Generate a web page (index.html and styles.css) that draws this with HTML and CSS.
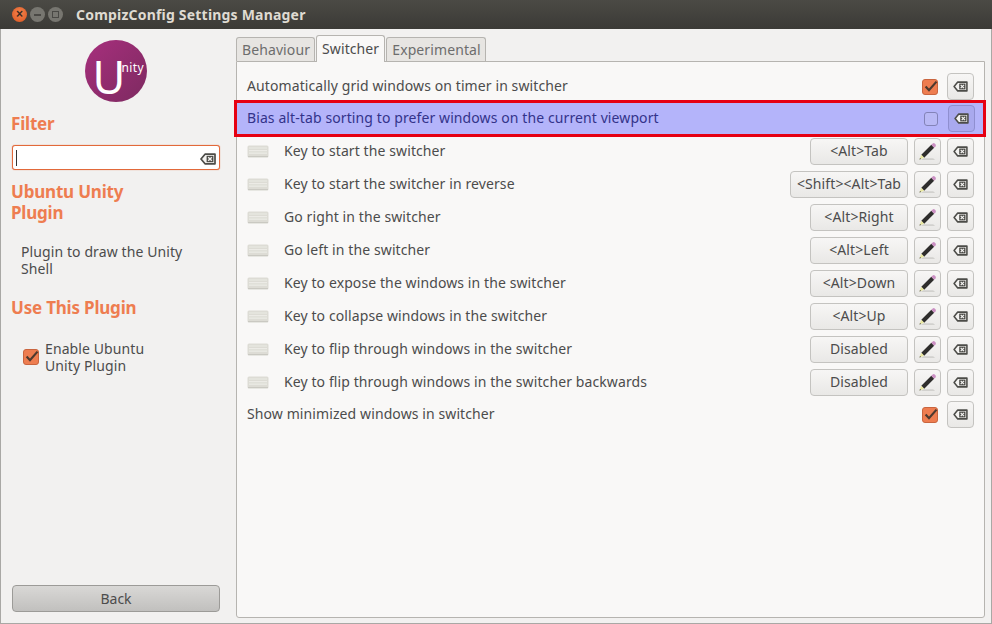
FILE: index.html
```html
<!DOCTYPE html>
<html lang="en">
<head>
<meta charset="utf-8">
<title>CompizConfig Settings Manager</title>
<link rel="stylesheet" href="styles.css">
</head>
<body>
<svg class="defs" width="0" height="0" aria-hidden="true">
  <symbol id="clear" viewBox="0 0 16 12">
    <path d="M5 1.2H15V10.8H5L1 6Z" fill="#f4f3f1" stroke="#4c4c48" stroke-width="1.7" stroke-linejoin="round"/>
    <rect x="6.6" y="2.8" width="6.8" height="6.4" fill="#4c4c48"/>
    <path d="M8.2 4.2L11.8 7.8M11.8 4.2L8.2 7.8" stroke="#f4f3f1" stroke-width="1.4"/>
  </symbol>
  <symbol id="pencil" viewBox="0 0 20 20">
    <path d="M3 19H18L16 17.2H6Z" fill="#d2d1ce"/>
    <path d="M3.5 13.5L14 3L17 6L6.5 16.5Z" fill="#2e2d2c"/>
    <path d="M14 3L15.5 1.5Q16.5 .7 17.6 1.6L18.4 2.4Q19.3 3.5 18.5 4.5L17 6Z" fill="#cb8fc3"/>
    <path d="M3.5 13.5L6.5 16.5L1.5 18.5Z" fill="#e8e6a0"/>
    <path d="M2.2 16.8L3.2 17.8L1.5 18.5Z" fill="#333"/>
  </symbol>
  <symbol id="keyboard" viewBox="0 0 22 13">
    <rect x=".5" y=".5" width="21" height="12" rx="1.5" fill="#dddcd5"/>
    <path d="M2 3H20M2 5.6H20M2 8.2H20" stroke="#ecebe6" stroke-width="1.2"/>
    <path d="M1 11.6H21" stroke="#c8c7c0" stroke-width="1"/>
  </symbol>
  <symbol id="check" viewBox="0 0 16 16">
    <rect x=".5" y=".5" width="15" height="15" rx="2.5" fill="#ee7d50" stroke="#c9653f"/>
    <path d="M3.6 7.5L7 11.2L14.5 2.6" fill="none" stroke="#4d3a2f" stroke-width="2.2"/>
  </symbol>
</svg>

<header class="titlebar">
  <div class="wm-buttons">
    <span class="wm wm-close">×</span>
    <span class="wm wm-min"><i class="wm-dash"></i></span>
    <span class="wm wm-max"><i class="wm-box"></i></span>
  </div>
  <h1 class="title">CompizConfig Settings Manager</h1>
</header>

<div class="window">
  <aside class="sidebar">
    <div class="logo-wrap">
      <div class="logo"><span class="logo-u">U</span><span class="logo-nity">nity</span></div>
    </div>
    <h2 class="side-heading filter-heading">Filter</h2>
    <div class="filter-input">
      <span class="caret"></span>
      <svg class="filter-clear"><use href="#clear"/></svg>
    </div>
    <h2 class="side-heading plugin-heading">Ubuntu Unity<br>Plugin</h2>
    <p class="plugin-desc">Plugin to draw the Unity<br>Shell</p>
    <h2 class="side-heading use-heading">Use This Plugin</h2>
    <label class="enable">
      <svg class="enable-check"><use href="#check"/></svg>
      <span>Enable Ubuntu<br>Unity Plugin</span>
    </label>
    <button class="back">Back</button>
  </aside>

  <main class="content">
    <nav class="tabs">
      <span class="tab">Behaviour</span>
      <span class="tab tab-active">Switcher</span>
      <span class="tab">Experimental</span>
    </nav>
    <section class="panel">
      <div class="row">
        <span class="label">Automatically grid windows on timer in switcher</span>
        <svg class="check"><use href="#check"/></svg>
        <span class="icon-btn"><svg class="clear-icon"><use href="#clear"/></svg></span>
      </div>
      <div class="row row-selected">
        <span class="label">Bias alt-tab sorting to prefer windows on the current viewport</span>
        <span class="unchecked"></span>
        <span class="icon-btn"><svg class="clear-icon"><use href="#clear"/></svg></span>
      </div>
      <div class="row">
        <svg class="kbd"><use href="#keyboard"/></svg>
        <span class="label">Key to start the switcher</span>
        <span class="key-btn">&lt;Alt&gt;Tab</span>
        <span class="icon-btn"><svg class="pencil"><use href="#pencil"/></svg></span>
        <span class="icon-btn"><svg class="clear-icon"><use href="#clear"/></svg></span>
      </div>
      <div class="row">
        <svg class="kbd"><use href="#keyboard"/></svg>
        <span class="label">Key to start the switcher in reverse</span>
        <span class="key-btn key-wide">&lt;Shift&gt;&lt;Alt&gt;Tab</span>
        <span class="icon-btn"><svg class="pencil"><use href="#pencil"/></svg></span>
        <span class="icon-btn"><svg class="clear-icon"><use href="#clear"/></svg></span>
      </div>
      <div class="row">
        <svg class="kbd"><use href="#keyboard"/></svg>
        <span class="label">Go right in the switcher</span>
        <span class="key-btn">&lt;Alt&gt;Right</span>
        <span class="icon-btn"><svg class="pencil"><use href="#pencil"/></svg></span>
        <span class="icon-btn"><svg class="clear-icon"><use href="#clear"/></svg></span>
      </div>
      <div class="row">
        <svg class="kbd"><use href="#keyboard"/></svg>
        <span class="label">Go left in the switcher</span>
        <span class="key-btn">&lt;Alt&gt;Left</span>
        <span class="icon-btn"><svg class="pencil"><use href="#pencil"/></svg></span>
        <span class="icon-btn"><svg class="clear-icon"><use href="#clear"/></svg></span>
      </div>
      <div class="row">
        <svg class="kbd"><use href="#keyboard"/></svg>
        <span class="label">Key to expose the windows in the switcher</span>
        <span class="key-btn">&lt;Alt&gt;Down</span>
        <span class="icon-btn"><svg class="pencil"><use href="#pencil"/></svg></span>
        <span class="icon-btn"><svg class="clear-icon"><use href="#clear"/></svg></span>
      </div>
      <div class="row">
        <svg class="kbd"><use href="#keyboard"/></svg>
        <span class="label">Key to collapse windows in the switcher</span>
        <span class="key-btn">&lt;Alt&gt;Up</span>
        <span class="icon-btn"><svg class="pencil"><use href="#pencil"/></svg></span>
        <span class="icon-btn"><svg class="clear-icon"><use href="#clear"/></svg></span>
      </div>
      <div class="row">
        <svg class="kbd"><use href="#keyboard"/></svg>
        <span class="label">Key to flip through windows in the switcher</span>
        <span class="key-btn">Disabled</span>
        <span class="icon-btn"><svg class="pencil"><use href="#pencil"/></svg></span>
        <span class="icon-btn"><svg class="clear-icon"><use href="#clear"/></svg></span>
      </div>
      <div class="row">
        <svg class="kbd"><use href="#keyboard"/></svg>
        <span class="label">Key to flip through windows in the switcher backwards</span>
        <span class="key-btn">Disabled</span>
        <span class="icon-btn"><svg class="pencil"><use href="#pencil"/></svg></span>
        <span class="icon-btn"><svg class="clear-icon"><use href="#clear"/></svg></span>
      </div>
      <div class="row row-last">
        <span class="label">Show minimized windows in switcher</span>
        <svg class="check"><use href="#check"/></svg>
        <span class="icon-btn"><svg class="clear-icon"><use href="#clear"/></svg></span>
      </div>
    </section>
  </main>
</div>
</body>
</html>
```
FILE: styles.css
```css
* { box-sizing: border-box; }
html, body { margin: 0; padding: 0; }
body {
  width: 992px;
  height: 624px;
  overflow: hidden;
  display: flex;
  flex-direction: column;
  background: #f2f1f0;
  color: #4c4c4c;
  font: 14px/17px "Noto Sans", "Open Sans", sans-serif;
  letter-spacing: .1px;
}
.defs { position: absolute; }

/* Title bar */
.titlebar {
  height: 29px;
  flex: none;
  display: flex;
  align-items: center;
  padding-left: 12px;
  background: linear-gradient(#4b4a45, #3b3a36);
}
.wm-buttons { display: flex; gap: 3px; }
.wm {
  width: 15px;
  height: 15px;
  border-radius: 50%;
  display: flex;
  align-items: center;
  justify-content: center;
  background: #777670;
  color: #3a2a20;
  font: bold 12px/15px "Liberation Sans", sans-serif;
}
.wm-close { background: radial-gradient(circle at 50% 40%, #f58550, #d9541e); }
.wm-dash { width: 7px; height: 2px; background: #4a4945; }
.wm-box { width: 7px; height: 7px; border: 1px solid #4a4945; }
.title {
  margin: 0 0 0 13px;
  color: #dfdbd2;
  font: bold 14px/17px "Noto Sans", sans-serif;
  letter-spacing: .2px;
}

/* Window body */
.window {
  flex: 1;
  display: flex;
  border-left: 1px solid #a9a8a5;
  border-right: 1px solid #a9a8a5;
  border-bottom: 1px solid #a9a8a5;
}
.sidebar {
  width: 235px;
  flex: none;
  display: flex;
  flex-direction: column;
  padding: 0 0 0 10px;
}
.logo-wrap { display: flex; justify-content: center; padding-top: 11px; width: 209px; }
.logo {
  position: relative;
  width: 62px;
  height: 62px;
  border-radius: 50%;
  background: linear-gradient(135deg, #a72f7d, #7d2a60);
  color: #fff;
}
.logo-u {
  position: absolute;
  left: 8px;
  top: 14px;
  font: 45px/45px "Noto Sans", sans-serif;
}
.logo-nity {
  position: absolute;
  left: 37px;
  top: 20px;
  font: 12px/15px "Noto Sans", sans-serif;
  letter-spacing: .4px;
}
.side-heading {
  margin: 0;
  color: #ee7d50;
  font: bold 17px/21px "Noto Sans", sans-serif;
  letter-spacing: -.2px;
}
.filter-heading { margin-top: 11px; }
.filter-input {
  width: 208px;
  height: 25px;
  margin: 11px 0 0 1px;
  display: flex;
  align-items: center;
  justify-content: space-between;
  padding: 0 3px;
  background: #fff;
  border: 1px solid #e2693a;
  border-radius: 3px;
  box-shadow: 0 0 1px #e2693a;
}
.caret { width: 1px; height: 16px; background: #333; }
.filter-clear { width: 16px; height: 12px; margin-top: 2px; }
.plugin-heading { margin-top: 11px; }
.plugin-desc { margin: 20px 0 0 10px; }
.use-heading { margin-top: 20px; }
.enable {
  display: flex;
  align-items: center;
  gap: 6px;
  margin: 22px 0 0 12px;
}
.enable-check { width: 16px; height: 16px; flex: none; }
.back {
  width: 208px;
  height: 27px;
  margin-top: auto;
  margin-bottom: 11px;
  margin-left: 1px;
  border: 1px solid #9c9b98;
  border-radius: 4px;
  background: linear-gradient(#d9d8d6, #c1c0be);
  color: #4c4c4c;
  font: 14px/17px "Noto Sans", sans-serif;
}

/* Content */
.content { flex: 1; display: flex; flex-direction: column; padding-top: 8px; padding-bottom: 5px; min-width: 0; }
.tabs { display: flex; gap: 1px; height: 24px; position: relative; z-index: 1; }
.tab {
  height: 24px;
  padding: 3px 4px 0 5px;
  background: #e7e5e2;
  border: 1px solid #b6b4b0;
  border-bottom: none;
  border-radius: 3px 3px 0 0;
  color: #6d6d6d;
}
.tab-active { height: 27px; margin-top: -2px; background: #f9f8f7; color: #4c4c4c; padding: 4px 5px 0; }
.panel {
  flex: 1;
  width: 749px;
  padding-top: 8px;
  background: #f9f8f7;
  border: 1px solid #b6b4b0;
  border-radius: 0 0 3px 3px;
}
.row {
  height: 33px;
  display: flex;
  align-items: center;
  gap: 6px;
  padding: 0 10px;
}
.row-selected {
  height: 37px;
  margin: -3px -2px -2px -3px;
  position: relative;
  padding: 0 8px 0 10px;
  background: #b4b4fa;
  border: 3px solid #e60012;
  color: #33338a;
}
.row-last { margin-top: -1px; }
.label { flex: 1; white-space: nowrap; padding-bottom: 2px; }
.kbd { width: 22px; height: 13px; margin-right: 9px; flex: none; }
.check { width: 16px; height: 16px; flex: none; margin-right: 3px; }
.unchecked {
  width: 14px;
  height: 14px;
  margin-right: 4px;
  flex: none;
  border: 1px solid #8383b8;
  border-radius: 3px;
  background: #b9b9f5;
}
.key-btn, .icon-btn {
  height: 27px;
  flex: none;
  display: flex;
  align-items: center;
  justify-content: center;
  border: 1px solid #c4c3c0;
  border-radius: 4px;
  background: linear-gradient(#f7f6f5, #e9e8e6);
}
.key-btn { width: 98px; padding-bottom: 2px; }
.key-wide { width: 118px; }
.icon-btn { width: 27px; }
.row-selected .icon-btn { background: #a9a9ee; border-color: #8f8fd0; }
.clear-icon { width: 15px; height: 11px; }
.pencil { width: 19px; height: 19px; }
```
